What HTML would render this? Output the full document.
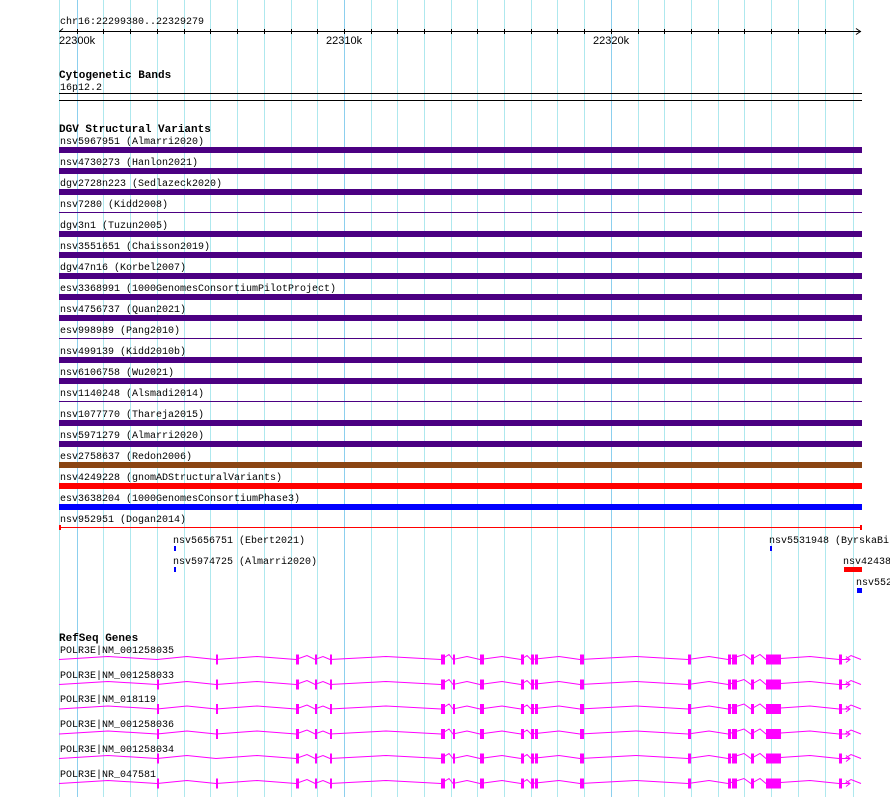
<!DOCTYPE html>
<html><head><meta charset="utf-8"><style>
html,body{margin:0;padding:0;background:#fff;width:890px;height:797px;overflow:hidden}
svg{display:block}
text{font-family:"Liberation Mono",monospace;font-size:10px;fill:#000}
.b{font-weight:bold;font-size:11px}
.s{font-family:"Liberation Sans",sans-serif;font-size:11px}
</style></head><body>
<svg width="890" height="797" xmlns="http://www.w3.org/2000/svg">
<defs>
<g id="gene">
<path d="M59 0 L108 -3 L157 0 L187 -3 L216 0 L257 -3 L296 0 L307 -4 L315 0 L323 -3 L330 0 L386 -3 L441 0 L449 -5 L453 0 L467 -3 L480 0 L502 -3 L521 0 L527 -4 L531 0 L559 -3 L580 0 L636 -3 L688 0 L709 -3 L728 0 L744 -5 L751 0 L760 -5 L766 0 L810 -3 L839 0 L845 0 L851 -4 L861 0" fill="none" stroke="#f0f" stroke-width="1"/>
<g fill="#f0f">
<rect x="296" y="-5" width="3" height="10"/><rect x="315" y="-5" width="2" height="10"/><rect x="330" y="-5" width="2" height="10"/>
<rect x="441" y="-5" width="4" height="10"/><rect x="453" y="-5" width="2" height="10"/><rect x="480" y="-5" width="4" height="10"/>
<rect x="521" y="-5" width="3" height="10"/><rect x="531" y="-5" width="3" height="10"/><rect x="535" y="-5" width="3" height="10"/>
<rect x="580" y="-5" width="4" height="10"/><rect x="688" y="-5" width="3" height="10"/><rect x="728" y="-5" width="3" height="10"/>
<rect x="732" y="-5" width="5" height="10"/><rect x="751" y="-5" width="3" height="10"/><rect x="766" y="-5" width="15" height="10"/>
<rect x="839" y="-5" width="3" height="10"/>
</g>
<path d="M844 0 L850 0 M846 -3 L850 0 L846 3" fill="none" stroke="#f0f" stroke-width="1"/>
</g>
</defs>
<g stroke="#aee8ee" stroke-width="1">
<line x1="59.5" y1="0" x2="59.5" y2="797"/>
<line x1="103.5" y1="0" x2="103.5" y2="797"/><line x1="130.5" y1="0" x2="130.5" y2="797"/><line x1="157.5" y1="0" x2="157.5" y2="797"/><line x1="184.5" y1="0" x2="184.5" y2="797"/><line x1="210.5" y1="0" x2="210.5" y2="797"/><line x1="237.5" y1="0" x2="237.5" y2="797"/><line x1="264.5" y1="0" x2="264.5" y2="797"/><line x1="291.5" y1="0" x2="291.5" y2="797"/><line x1="317.5" y1="0" x2="317.5" y2="797"/>
<line x1="371.5" y1="0" x2="371.5" y2="797"/><line x1="397.5" y1="0" x2="397.5" y2="797"/><line x1="424.5" y1="0" x2="424.5" y2="797"/><line x1="451.5" y1="0" x2="451.5" y2="797"/><line x1="477.5" y1="0" x2="477.5" y2="797"/><line x1="504.5" y1="0" x2="504.5" y2="797"/><line x1="531.5" y1="0" x2="531.5" y2="797"/><line x1="557.5" y1="0" x2="557.5" y2="797"/><line x1="584.5" y1="0" x2="584.5" y2="797"/>
<line x1="638.5" y1="0" x2="638.5" y2="797"/><line x1="664.5" y1="0" x2="664.5" y2="797"/><line x1="691.5" y1="0" x2="691.5" y2="797"/><line x1="718.5" y1="0" x2="718.5" y2="797"/><line x1="744.5" y1="0" x2="744.5" y2="797"/><line x1="771.5" y1="0" x2="771.5" y2="797"/><line x1="798.5" y1="0" x2="798.5" y2="797"/><line x1="825.5" y1="0" x2="825.5" y2="797"/><line x1="853.5" y1="0" x2="853.5" y2="797"/>
</g>
<g stroke="#8ccfee" stroke-width="1">
<line x1="77.5" y1="0" x2="77.5" y2="797"/><line x1="344.5" y1="0" x2="344.5" y2="797"/><line x1="611.5" y1="0" x2="611.5" y2="797"/>
</g>
<text x="60" y="24">chr16:22299380..22329279</text>
<g stroke="#000" stroke-width="1" fill="none">
<line x1="59" y1="31.5" x2="861" y2="31.5"/>
<path d="M856 28.5 L860.5 31.5 L856 34.5"/>
<path d="M63 28.5 L59.5 31.5"/>
<path d="M77.5 29 V34 M103.5 29 V34 M130.5 29 V34 M157.5 29 V34 M184.5 29 V34 M210.5 29 V34 M237.5 29 V34 M264.5 29 V34 M291.5 29 V34 M317.5 29 V34 M344.5 29 V34 M371.5 29 V34 M397.5 29 V34 M424.5 29 V34 M451.5 29 V34 M477.5 29 V34 M504.5 29 V34 M531.5 29 V34 M557.5 29 V34 M584.5 29 V34 M611.5 29 V34 M638.5 29 V34 M664.5 29 V34 M691.5 29 V34 M718.5 29 V34 M744.5 29 V34 M771.5 29 V34 M798.5 29 V34 M825.5 29 V34"/>
</g>
<text class="s" x="59" y="44">22300k</text>
<text class="s" x="326" y="44">22310k</text>
<text class="s" x="593" y="44">22320k</text>
<text class="b" x="59" y="78">Cytogenetic Bands</text>
<text x="60" y="90">16p12.2</text>
<rect x="59" y="93" width="803" height="1" fill="#000"/>
<rect x="59" y="100" width="803" height="1" fill="#000"/>
<text class="b" x="59" y="132">DGV Structural Variants</text>
<g>
<text x="60" y="144">nsv5967951 (Almarri2020)</text>
<text x="60" y="165">nsv4730273 (Hanlon2021)</text>
<text x="60" y="186">dgv2728n223 (Sedlazeck2020)</text>
<text x="60" y="207">nsv7280 (Kidd2008)</text>
<text x="60" y="228">dgv3n1 (Tuzun2005)</text>
<text x="60" y="249">nsv3551651 (Chaisson2019)</text>
<text x="60" y="270">dgv47n16 (Korbel2007)</text>
<text x="60" y="291">esv3368991 (1000GenomesConsortiumPilotProject)</text>
<text x="60" y="312">nsv4756737 (Quan2021)</text>
<text x="60" y="333">esv998989 (Pang2010)</text>
<text x="60" y="354">nsv499139 (Kidd2010b)</text>
<text x="60" y="375">nsv6106758 (Wu2021)</text>
<text x="60" y="396">nsv1140248 (Alsmadi2014)</text>
<text x="60" y="417">nsv1077770 (Thareja2015)</text>
<text x="60" y="438">nsv5971279 (Almarri2020)</text>
<text x="60" y="459">esv2758637 (Redon2006)</text>
<text x="60" y="480">nsv4249228 (gnomADStructuralVariants)</text>
<text x="60" y="501">esv3638204 (1000GenomesConsortiumPhase3)</text>
<text x="60" y="522">nsv952951 (Dogan2014)</text>
</g>
<g fill="#4b0082">
<rect x="59" y="147" width="803" height="6"/>
<rect x="59" y="168" width="803" height="6"/>
<rect x="59" y="189" width="803" height="6"/>
<rect x="59" y="212" width="803" height="1"/>
<rect x="59" y="231" width="803" height="6"/>
<rect x="59" y="252" width="803" height="6"/>
<rect x="59" y="273" width="803" height="6"/>
<rect x="59" y="294" width="803" height="6"/>
<rect x="59" y="315" width="803" height="6"/>
<rect x="59" y="338" width="803" height="1"/>
<rect x="59" y="357" width="803" height="6"/>
<rect x="59" y="378" width="803" height="6"/>
<rect x="59" y="401" width="803" height="1"/>
<rect x="59" y="420" width="803" height="6"/>
<rect x="59" y="441" width="803" height="6"/>
</g>
<rect x="59" y="462" width="803" height="6" fill="#8b4513"/>
<rect x="59" y="483" width="803" height="6" fill="#f00"/>
<rect x="59" y="504" width="803" height="6" fill="#00f"/>
<rect x="59" y="527" width="803" height="1" fill="#f00"/>
<rect x="59" y="525" width="2" height="5" fill="#f00"/>
<rect x="860" y="525" width="2" height="5" fill="#f00"/>
<text x="173" y="543">nsv5656751 (Ebert2021)</text>
<rect x="174" y="546" width="2" height="5" fill="#00f"/>
<text x="173" y="564">nsv5974725 (Almarri2020)</text>
<rect x="174" y="567" width="2" height="5" fill="#00f"/>
<text x="769" y="543">nsv5531948 (ByrskaBi</text>
<rect x="770" y="546" width="2" height="5" fill="#00f"/>
<text x="843" y="564">nsv42438</text>
<rect x="844" y="567" width="18" height="5" fill="#f00"/>
<text x="856" y="585">nsv552</text>
<rect x="857" y="588" width="5" height="5" fill="#00f"/>
<text class="b" x="59" y="641">RefSeq Genes</text>
<text x="60" y="653">POLR3E|NM_001258035</text>
<text x="60" y="678">POLR3E|NM_001258033</text>
<text x="60" y="702">POLR3E|NM_018119</text>
<text x="60" y="727">POLR3E|NM_001258036</text>
<text x="60" y="752">POLR3E|NM_001258034</text>
<text x="60" y="777">POLR3E|NR_047581</text>
<g fill="#f0f">
<use href="#gene" transform="translate(0,659.5)"/>
<rect x="216" y="654.5" width="2" height="10"/>
<use href="#gene" transform="translate(0,684.5)"/>
<rect x="157" y="679.5" width="2" height="10"/><rect x="216" y="679.5" width="2" height="10"/>
<use href="#gene" transform="translate(0,709)"/>
<rect x="157" y="704" width="2" height="10"/><rect x="216" y="704" width="2" height="10"/>
<use href="#gene" transform="translate(0,734)"/>
<rect x="157" y="729" width="2" height="10"/><rect x="216" y="729" width="2" height="10"/>
<use href="#gene" transform="translate(0,758.5)"/>
<rect x="157" y="753.5" width="2" height="10"/>
<use href="#gene" transform="translate(0,783.5)"/>
<rect x="157" y="778.5" width="2" height="10"/><rect x="216" y="778.5" width="2" height="10"/>
</g>
</svg>
</body></html>
